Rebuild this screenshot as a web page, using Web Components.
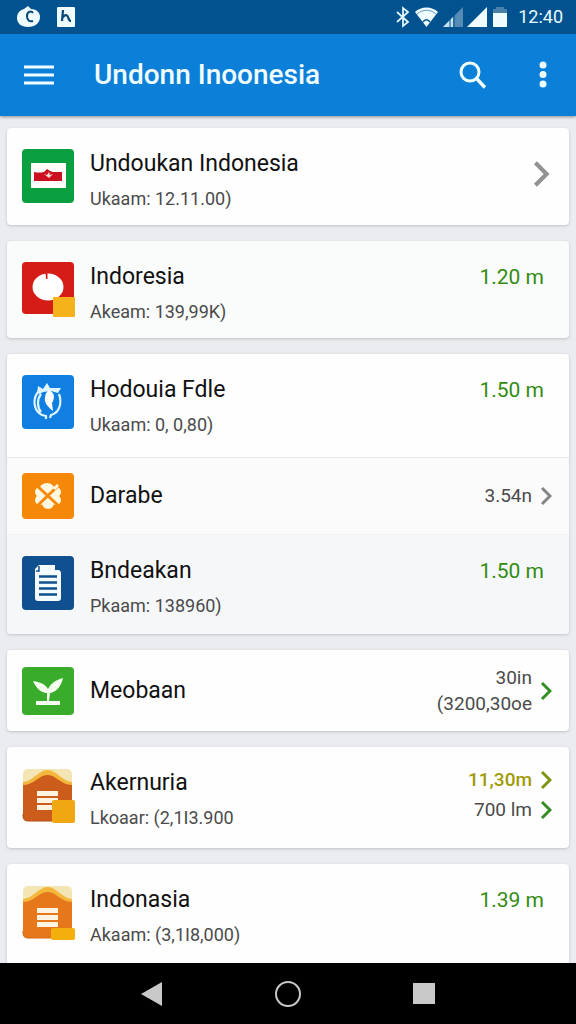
<!DOCTYPE html>
<html lang="id">
<head>
<meta charset="utf-8">
<meta name="viewport" content="width=device-width, initial-scale=1">
<title>Undonn Inoonesia</title>
<style>
  html, body { margin: 0; height: 100%; }
  body { font-family: Roboto, "Liberation Sans", sans-serif; background: #ebecf0; color: #111; }
</style>
</head>
<body>
<app-screen>
  <status-bar slot="top">12:40</status-bar>
  <app-bar slot="top">Undonn Inoonesia</app-bar>

  <list-card>
    <list-row style="--row-height:97px">
      <tile-icon slot="icon" name="flag"></tile-icon>
      Undoukan Indonesia
      <span slot="detail">Ukaam: 12.11.00)</span>
      <chevron-icon slot="end" size="large"></chevron-icon>
    </list-row>
  </list-card>

  <list-card tint="cool">
    <list-row style="--row-height:97px">
      <tile-icon slot="icon" name="globe"></tile-icon>
      Indoresia
      <span slot="detail">Akeam: 139,99K)</span>
      <value-text slot="value" tone="green">1.20 m</value-text>
    </list-row>
  </list-card>

  <list-card>
    <list-row style="--row-height:103px">
      <tile-icon slot="icon" name="bird"></tile-icon>
      Hodouia Fdle
      <span slot="detail">Ukaam: 0, 0,80)</span>
      <value-text slot="value" tone="green">1.50 m</value-text>
    </list-row>
    <list-row single tint="light" style="--row-height:76px">
      <tile-icon slot="icon" name="clover"></tile-icon>
      Darabe
      <value-text slot="end">3.54n<chevron-icon></chevron-icon></value-text>
    </list-row>
    <list-row tint="cool" style="--row-height:99px">
      <tile-icon slot="icon" name="document"></tile-icon>
      Bndeakan
      <span slot="detail">Pkaam: 138960)</span>
      <value-text slot="value" tone="green">1.50 m</value-text>
    </list-row>
  </list-card>

  <list-card>
    <list-row single style="--row-height:81px">
      <tile-icon slot="icon" name="plant"></tile-icon>
      Meobaan
      <value-text slot="end"><span>30in<br>(3200,30oe</span><chevron-icon tone="green"></chevron-icon></value-text>
    </list-row>
  </list-card>

  <list-card>
    <list-row style="--row-height:101px">
      <tile-icon slot="icon" name="parcel"></tile-icon>
      Akernuria
      <span slot="detail">Lkoaar: (2,1I3.900</span>
      <value-text slot="end" tone="olive">11,30m<chevron-icon tone="olive"></chevron-icon></value-text>
      <value-text slot="end">700 lm<chevron-icon tone="green"></chevron-icon></value-text>
    </list-row>
  </list-card>

  <list-card>
    <list-row style="--row-height:110px">
      <tile-icon slot="icon" name="package"></tile-icon>
      Indonasia
      <span slot="detail">Akaam: (3,1I8,000)</span>
      <value-text slot="value" tone="green">1.39 m</value-text>
    </list-row>
  </list-card>

  <nav-bar slot="bottom"></nav-bar>
</app-screen>

<script>
const define = (name, render) => customElements.define(name, class extends HTMLElement {
  constructor() {
    super();
    this.attachShadow({ mode: 'open' });
  }
  connectedCallback() {
    this.shadowRoot.innerHTML = render(this);
  }
});

define('app-screen', () => `
  <style>
    :host { display: flex; flex-direction: column; height: 100vh; }
    main { flex: 1; min-height: 0; overflow: hidden; display: flex; flex-direction: column; gap: 16px; padding: 12px 7px 0; }
    header { position: relative; box-shadow: 0 1px 3px rgba(0,0,0,.4); }
  </style>
  <header><slot name="top"></slot></header>
  <main><slot></slot></main>
  <slot name="bottom"></slot>`);

define('status-bar', () => `
  <style>
    :host { display: flex; align-items: center; justify-content: space-between; height: 34px; padding: 0 13px 0 16px; background: #01528f; color: #e9fbff; font-size: 18px; line-height: 34px; }
    div { display: flex; align-items: center; }
    .left { gap: 16px; }
    .right { gap: 4px; }
    svg { display: block; }
    .time { margin-left: 6px; }
  </style>
  <div class="left">
    <svg width="25" height="24" viewBox="0 0 25 24"><path fill="#effcff" d="M8 4 12 1l3 3c6 0 9 4 9 8 0 6-5 10-12 10S1 18 1 13c0-5 3-8 7-9Z"/><path fill="none" stroke="#074575" stroke-width="2" d="M17 8c-2-3-6-1-6 3 0 5 3 6 6 5"/></svg>
    <svg width="18" height="22" viewBox="0 0 18 22"><rect x="0" y="1" width="18" height="20" rx="1" fill="#effcff"/><path fill="none" stroke="#074575" stroke-width="2.2" d="M6 4 5 15M5 13c1-4 5-5 6-2 1 3 1 4 3 4"/></svg>
  </div>
  <div class="right">
    <svg width="14" height="22" viewBox="0 0 14 22"><path fill="none" stroke="#dff5ff" stroke-width="1.8" d="m1 6 11 10-5 4V2l5 4L1 16"/></svg>
    <svg width="25" height="22" viewBox="0 0 25 22"><path fill="#effcff" d="M1 6C7 0 18 0 24 6L12.500 21Z"/><path fill="none" stroke="#6596bd" stroke-width="1" d="M3 8c6-5 13-5 19 0"/><path fill="none" stroke="#01528f" stroke-width="1.500" d="M9 16c2-3 5-3 7 0"/></svg>
    <svg width="20" height="22" viewBox="0 0 20 22"><path fill="#568bb6" d="M0 21 20 1v20Z"/><path fill="#c3e2f2" d="M0 21 10 11v10Z"/><path stroke="#01528f" d="M7 12v9M11 8v13"/></svg>
    <svg width="21" height="22" viewBox="0 0 21 22"><path fill="#effcff" d="M0 21 20 1v20Z"/></svg>
    <svg width="16" height="22" viewBox="0 0 16 22"><path fill="#4980aa" d="M4 1h8v2h3v5H1V3h3Z"/><path fill="#effcff" d="M1 7h14v14H1Z"/></svg>
    <span class="time"><slot></slot></span>
  </div>`);

define('app-bar', () => `
  <style>
    :host { display: flex; align-items: center; height: 82px; padding: 0 21px 0 19px; background: #0c7fd8; color: #effdff; }
    button { display: grid; place-items: center; width: 40px; height: 48px; padding: 0; border: 0; background: none; color: inherit; }
    h1 { flex: 1; margin: 0 0 0 35px; font-size: 28px; line-height: 40px; font-weight: 500; white-space: nowrap; }
    .more { width: 24px; margin-left: 38px; }
  </style>
  <button aria-label="Menu"><svg width="30" height="20" viewBox="0 0 30 20"><path stroke="currentColor" stroke-width="3" d="M0 2h30M0 10h30M0 18h30"/></svg></button>
  <h1><slot></slot></h1>
  <button aria-label="Search"><svg width="30" height="30" viewBox="0 0 30 30"><circle cx="12" cy="12" r="9" fill="none" stroke="currentColor" stroke-width="3"/><path d="m18.500 18.500 8.500 9" stroke="currentColor" stroke-width="3.500"/></svg></button>
  <button class="more" aria-label="More"><svg width="8" height="28" viewBox="0 0 8 28" fill="currentColor"><circle cx="4" cy="4" r="3.500"/><circle cx="4" cy="13.500" r="3.500"/><circle cx="4" cy="23" r="3.500"/></svg></button>`);

define('list-card', () => `
  <style>
    :host { display: block; flex: none; overflow: hidden; border-radius: 4px; background: #fefefe; box-shadow: 0 1px 3px rgba(40,45,60,.22); }
    :host([tint=cool]) { background: #fafbfb; }
  </style>
  <slot></slot>`);

define('list-row', el => `
  <style>
    :host { display: block; }
    :host(:not(:first-child)) { border-top: 1px solid #e6e8eb; }
    :host([tint=light]) { background: #fbfbfb; }
    :host([tint=cool]) { background: #f6f7f9; border-top-color: #f0f2f4; }
    a { display: flex; align-items: flex-start; gap: 15px; box-sizing: border-box; min-height: var(--row-height); padding: 0 17px 0 15px; color: inherit; text-decoration: none; }
    .icon { padding-top: 21px; }
    .text { flex: 1; padding-top: 18px; min-width: 0; }
    .title { font-size: 23px; line-height: 36px; white-space: nowrap; }
    .detail { font-size: 18px; line-height: 34px; color: #4b4b4b; white-space: nowrap; }
    .value { padding: 18px 8px 0 0; }
    .end { align-self: center; display: flex; flex-direction: column; gap: 4px; align-items: flex-end; padding-bottom: 6px; }
    :host([single]) a { align-items: center; }
    :host([single]) .icon, :host([single]) .text { padding-top: 0; }
    :host([single]) .end { padding-bottom: 0; }
  </style>
  <a href="#">
    <div class="icon"><slot name="icon"></slot></div>
    <div class="text">
      <div class="title"><slot></slot></div>
      ${el.hasAttribute('single') ? '' : '<div class="detail"><slot name="detail"></slot></div>'}
    </div>
    ${el.querySelector('[slot=value]') ? '<div class="value"><slot name="value"></slot></div>' : ''}
    ${el.querySelector('[slot=end]') ? '<div class="end"><slot name="end"></slot></div>' : ''}
  </a>`);

define('value-text', () => `
  <style>
    :host { display: flex; align-items: center; gap: 8px; font-size: 19px; line-height: 26px; color: #4b4b4b; text-align: right; white-space: nowrap; }
    :host([tone=green]) { font-size: 21px; line-height: 36px; color: #328c12; }
    :host([tone=olive]) { font-weight: 500; color: #a09a08; }
  </style>
  <slot></slot>`);

define('chevron-icon', () => `
  <style>
    :host { display: block; width: 12px; height: 20px; color: #858585; }
    :host([size=large]) { width: 18px; height: 28px; margin-right: 2px; color: #929292; }
    :host([tone=green]) { color: #338d20; }
    :host([tone=olive]) { color: #7d9411; }
    svg { display: block; width: 100%; height: 100%; }
  </style>
  <svg viewBox="0 0 12 20"><path d="m2 2 8 8-8 8" fill="none" stroke="currentColor" stroke-width="3"/></svg>`);

const parcelArt = (body, edge, badge) => `
  <rect x="1" y="1" width="49" height="52" rx="5" fill="#f3e5b4"/>
  <path d="M1 14C10 14 18 1 26 2c8 0 14 11 24 12v34q0 5-5 5H6q-5 0-5-5Z" fill="#f2b73c"/>
  <path d="M1 17C12 17 18 6 26 7c8 0 13 10 24 10v31q0 5-5 5H6q-5 0-5-5Z" fill="${body}"/>
  <path d="M1 46v2q0 5 5 5h39" fill="none" stroke="${edge}"/>
  <path d="M15 25.500h21M15 32.500h21M15 39.500h21" stroke="#fff4e2" stroke-width="5"/>${badge}`;

const tiles = {
  flag: [54, '#0ba03f', '<rect x="9" y="14" width="35" height="25" fill="#fffdf9"/><path fill="#cb1020" d="M12 23q5 1 10 0l3-3 3 2 3 1h9v9H12Z"/><path fill="#fbd9d3" d="m22 25 3 1 2-3 1 3 3-1-4 4Z"/>'],
  globe: [54, '#d51c16', '<ellipse cx="26" cy="25" rx="15.500" ry="13.500" fill="#fff"/><path d="M23.500 11h2v6h-1.500Z" fill="#d51c16"/>', '<rect x="31" y="35" width="22" height="20" rx="1" fill="#f6b21a"/>'],
  bird: [54, '#117fe2', '<path fill="none" stroke="#dff5ff" stroke-width="2.200" d="M16 17c-6 8-4 19 4 23l4 1v3m4-1 1-3c9-2 11-13 8-21M19 19c-4 5-4 13 0 18"/><path fill="#dff5ff" d="m15 18 1-7 5 3 4-6 3 5h11l-3 5-7-2-8 1-3 2Z"/><path fill="#fff" d="M27 15c6 3 6 8 3 13l1 8c-6-5-9-9-8-13 0-3 1-6 4-8Z"/>'],
  clover: [46, '#f58809', '<g fill="#fff7df"><circle cx="25" cy="18" r="8"/><circle cx="18" cy="19" r="5"/><circle cx="18" cy="27" r="5"/><circle cx="34" cy="19" r="5"/><circle cx="34" cy="27" r="5"/><path d="M16 17h20v12H16Z"/><circle cx="26" cy="30" r="6"/></g><path d="m13 11 26 24M13 35 37 12" stroke="#f58809" stroke-width="3"/><path d="m32 16 4-4" stroke="#fff7df" stroke-width="3"/>'],
  document: [54, '#10508e', '<path fill="#f5fcff" d="m13 13 4-4h16v5h4q2 1 2 3v25q0 3-3 3H16q-3 0-3-3Z"/><path d="M17 10v5h-3" fill="none" stroke="#10508e" stroke-width="1.500"/><path d="M17 20.500h18M17 26.500h18M17 32.500h18M17 38.500h18" stroke="#10508e" stroke-width="2.500"/>'],
  plant: [48, '#39ad2b', '<path fill="#f5fff0" d="M11 14c7 1 12 3 15 8 3-6 8-9 15-11-2 9-7 14-13 15l-1 8h11v4H14v-4h11v-8c-6 0-11-5-14-12Z"/>'],
  parcel: [54, '', parcelArt('#cc5c1b', '#b94d14', '<rect x="30" y="32" width="23" height="23" rx="2" fill="#f0a712"/>')],
  package: [54, '', parcelArt('#e7771b', '#d9680f', '<rect x="29" y="43" width="24" height="12" rx="2" fill="#f3b00d"/>')]
};

define('tile-icon', el => {
  const [height, color, art, badge = ''] = tiles[el.getAttribute('name')];
  const tile = color ? `<rect width="52" height="${badge ? height - 2 : height}" rx="4" fill="${color}"/>` : '';
  return `
  <style>
    :host { display: block; width: 53px; }
    svg { display: block; overflow: visible; }
  </style>
  <svg width="53" height="${height}" viewBox="0 0 53 ${height}" aria-hidden="true">${tile}${art}${badge}</svg>`;
});

define('nav-bar', () => `
  <style>
    :host { display: flex; flex: none; justify-content: center; gap: 88px; align-items: center; height: 61px; background: #000; color: #c9c9c9; }
    button { display: grid; place-items: center; width: 48px; height: 48px; padding: 0; border: 0; background: none; color: inherit; }
    svg { display: block; }
  </style>
  <button aria-label="Back"><svg width="24" height="26" viewBox="0 0 24 26"><path d="M1 13 22 1v24Z" fill="currentColor"/></svg></button>
  <button aria-label="Home"><svg width="28" height="28" viewBox="0 0 28 28"><circle cx="14" cy="14" r="12" fill="none" stroke="currentColor" stroke-width="2"/></svg></button>
  <button aria-label="Recent"><svg width="22" height="22" viewBox="0 0 22 22"><rect width="22" height="21" fill="currentColor"/></svg></button>`);
</script>
</body>
</html>
